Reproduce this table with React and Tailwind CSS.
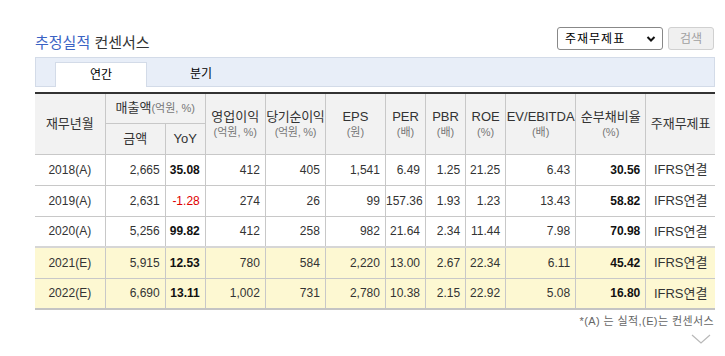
import React from 'react';

const rows = [
  { year: '2018(A)', sales: '2,665', yoy: '35.08', op: '412', net: '405', eps: '1,541', per: '6.49', pbr: '1.25', roe: '21.25', ev: '6.43', debt: '30.56', est: false },
  { year: '2019(A)', sales: '2,631', yoy: '-1.28', op: '274', net: '26', eps: '99', per: '157.36', pbr: '1.93', roe: '1.23', ev: '13.43', debt: '58.82', est: false },
  { year: '2020(A)', sales: '5,256', yoy: '99.82', op: '412', net: '258', eps: '982', per: '21.64', pbr: '2.34', roe: '11.44', ev: '7.98', debt: '70.98', est: false },
  { year: '2021(E)', sales: '5,915', yoy: '12.53', op: '780', net: '584', eps: '2,220', per: '13.00', pbr: '2.67', roe: '22.34', ev: '6.11', debt: '45.42', est: true },
  { year: '2022(E)', sales: '6,690', yoy: '13.11', op: '1,002', net: '731', eps: '2,780', per: '10.38', pbr: '2.15', roe: '22.92', ev: '5.08', debt: '16.80', est: true },
];

const widths = [70, 60, 40, 60, 60, 60, 40, 40, 40, 70, 70, 69];

const Unit = ({ children }) => (
  <span className="block text-[11px] leading-[14px] text-[#777]">{children}</span>
);

const th = 'font-normal border-r border-b border-[#c8c8c8] text-[13px] leading-[16px] whitespace-nowrap';

const App = () => {
  return (
    <div
      className="w-[725px] h-[356px] bg-white pl-[35px] pt-[27px] text-[#333]"
      style={{ fontFamily: '"Liberation Sans", "Noto Sans CJK KR", sans-serif' }}
    >
      <div className="w-[680px]">
        {/* Title + search */}
        <div className="flex items-end justify-between h-[23px]">
          <h2 className="text-[15px] leading-[17px] font-normal -mb-[1px]">
            <span className="text-[#3b63c4]">추정실적</span> <span className="text-[#333]">컨센서스</span>
          </h2>
          <div className="flex items-center gap-[5px] pr-[1px]">
            <div className="w-[106px] h-[23px] border border-[#888] rounded-[3px] flex items-center justify-between pl-[7px] pr-[6px] text-[12px] text-black">
              <span className="tracking-[1px]">주재무제표</span>
              <svg width="10" height="8" viewBox="0 0 10 8">
                <path d="M1.5 2l3.5 3.5L8.5 2" stroke="#111" strokeWidth="2" fill="none" />
              </svg>
            </div>
            <button className="w-[46px] h-[23px] border border-[#d0d0d0] rounded-[3px] bg-[#f0f0f0] text-[12px] text-[#a0a0a0]">
              검색
            </button>
          </div>
        </div>

        {/* Tabs */}
        <div className="mt-[7px] h-[30px] bg-[#e8eef8] border border-[#d3dbe8] flex items-end pl-[19px]">
          <div className="w-[92px] h-[25px] bg-white border border-b-0 border-[#d3dbe8] flex items-center justify-center text-[12px] text-black -mb-[1px]">
            연간
          </div>
          <div className="w-[108px] h-[25px] flex items-center justify-center text-[12px] text-black">
            분기
          </div>
        </div>

        {/* Table */}
        <table className="mt-[5px] w-[680px] border-collapse table-fixed text-[12px] border-t-[2px] border-t-[#333]">
          <colgroup>
            {widths.map((w, i) => (
              <col key={i} style={{ width: w }} />
            ))}
          </colgroup>
          <thead className="bg-[#f2f2f2] text-[#333]">
            <tr className="h-[30px]">
              <th rowSpan={2} className={th}>재무년월</th>
              <th colSpan={2} className={th}>
                매출액<span className="text-[11px] text-[#777]">(억원, %)</span>
              </th>
              <th rowSpan={2} className={th}>
                영업이익<Unit>(억원, %)</Unit>
              </th>
              <th rowSpan={2} className={`${th} text-[12px] tracking-[-0.3px]`}>
                당기순이익<Unit>(억원, %)</Unit>
              </th>
              <th rowSpan={2} className={th}>
                EPS<Unit>(원)</Unit>
              </th>
              <th rowSpan={2} className={th}>
                PER<Unit>(배)</Unit>
              </th>
              <th rowSpan={2} className={th}>
                PBR<Unit>(배)</Unit>
              </th>
              <th rowSpan={2} className={th}>
                ROE<Unit>(%)</Unit>
              </th>
              <th rowSpan={2} className={`${th} text-[12px]`}>
                EV/EBITDA<Unit>(배)</Unit>
              </th>
              <th rowSpan={2} className={th}>
                순부채비율<Unit>(%)</Unit>
              </th>
              <th rowSpan={2} className="font-normal border-b border-[#c8c8c8] text-[13px]">주재무제표</th>
            </tr>
            <tr className="h-[31px]">
              <th className={th}>금액</th>
              <th className={`${th} text-[12px]`}>YoY</th>
            </tr>
          </thead>
          <tbody>
            {rows.map((r, i) => {
              const td = 'border-r border-b border-[#c8c8c8] text-right pr-[5px]';
              const rowCls = r.est ? 'bg-[#fdf8d2]' : 'bg-white';
              const topThick = i === 3 ? 'border-t-[2px] border-t-[#d6d6d6]' : '';
              const lastThick = i === rows.length - 1 ? 'border-b-[2px] border-b-[#c4c4c4]' : '';
              const neg = r.yoy.startsWith('-');
              return (
                <tr key={r.year} className={`h-[31px] ${rowCls} ${topThick} ${lastThick}`}>
                  <td className="border-r border-b border-[#c8c8c8] text-center">{r.year}</td>
                  <td className={td}>{r.sales}</td>
                  <td className={`${td} ${neg ? 'text-[#e00000]' : 'text-[#111] font-semibold'}`}>{r.yoy}</td>
                  <td className={td}>{r.op}</td>
                  <td className={td}>{r.net}</td>
                  <td className={td}>{r.eps}</td>
                  <td className={td}>{r.per}</td>
                  <td className={td}>{r.pbr}</td>
                  <td className={td}>{r.roe}</td>
                  <td className={td}>{r.ev}</td>
                  <td className={`${td} font-semibold text-[#111]`}>{r.debt}</td>
                  <td className="border-b border-[#c8c8c8] text-center text-[13px]">IFRS연결</td>
                </tr>
              );
            })}
          </tbody>
        </table>

        <p className="text-right text-[11px] text-[#666] mt-[4px] pr-[1px] leading-[14px] tracking-[0.4px]">
          *(A) 는 실적,(E)는 컨센서스
        </p>
        <div className="flex justify-end pr-[4px] mt-[6px]">
          <svg width="20" height="10" viewBox="0 0 20 10">
            <path d="M1 1l9 8 9-8" stroke="#b8b8b8" strokeWidth="1.2" fill="none" />
          </svg>
        </div>
      </div>
    </div>
  );
};

export default App;
